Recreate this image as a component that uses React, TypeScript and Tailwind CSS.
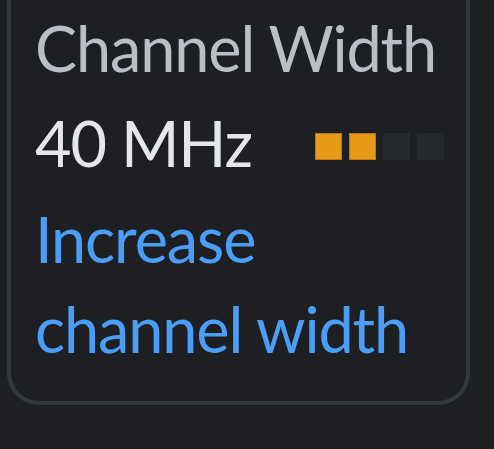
const levels = [true, true, false, false];

export default function App() {
  return (
    <div className="min-h-[449px] w-[494px] bg-[#1d1f23] pl-[7px] font-['Lato',sans-serif] tracking-[-1.1px]">
      <div className="w-[463px] rounded-b-[32px] border-x-[4.5px] border-b-[4.5px] border-[#34373c] pl-[24px] pr-[21px] pt-[3px] pb-[27px]">
        <p className="whitespace-nowrap text-[63px] leading-[90px] text-[#babfc6]">Channel Width</p>
        <div className="mt-[4.5px] flex items-center justify-between">
          <span className="text-[63px] leading-[90px] text-[#e4e6e9]">40 MHz</span>
          <div className="mt-[7px] mr-[1px] flex gap-[7px]">
            {levels.map((on, i) => (
              <span
                key={i}
                className={
                  on
                    ? "h-[27px] w-[27px] border border-[#b97a14] bg-[#e79a16]"
                    : "h-[27px] w-[27px] bg-[#262a2e]"
                }
              />
            ))}
          </div>
        </div>
        <a href="#" className="mt-[6px] block text-[63px] leading-[90px] text-[#4a9ef8]">
          Increase channel width
        </a>
      </div>
    </div>
  );
}
